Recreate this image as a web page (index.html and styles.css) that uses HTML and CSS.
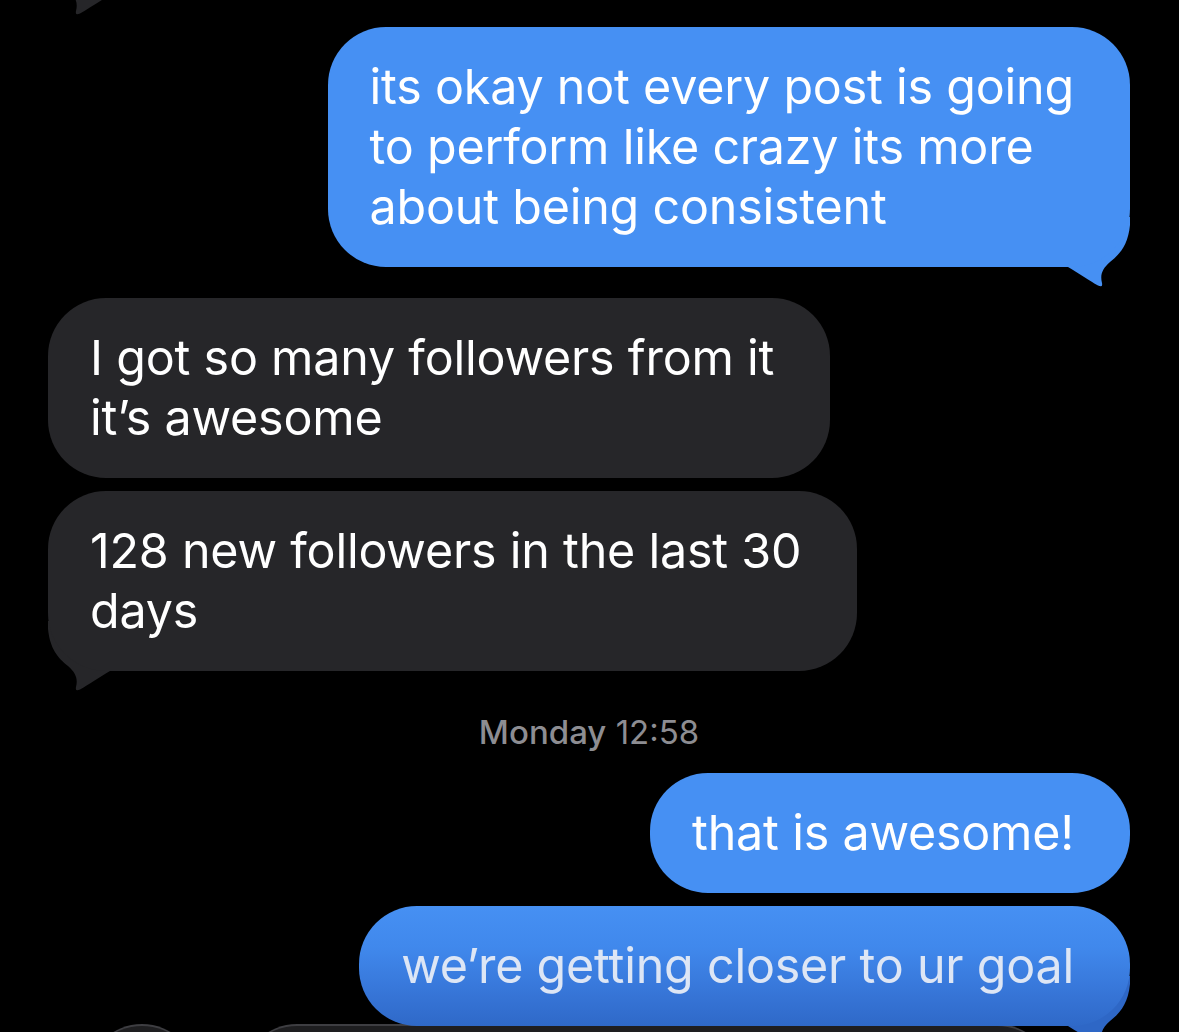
FILE: index.html
```html
<!DOCTYPE html>
<html lang="en">
<head>
    <meta charset="UTF-8">
    <meta name="viewport" content="width=device-width, initial-scale=1.0">
    <title>Messages</title>
    <link rel="stylesheet" href="styles.css">
</head>
<body>

    <div class="chat">
        <!-- tail of the message above, mostly scrolled off -->
        <div class="prev-tail">
            <svg width="70" height="15" viewBox="0 55 70 15">
                <path class="fill-gray" transform="translate(70 0) scale(-1 1)" d="M0 50 L8 50 C18 56 30 64 38 68.5 Q43 71 42 66 C40 58 42 52 50 45 C60 37 68 28 70 8 L70 0 L0 0 Z"/>
            </svg>
        </div>

        <div class="row sent">
            <div class="bubble blue">
                <svg class="tail tail-right" width="70" height="70" viewBox="0 0 70 70">
                    <path class="fill-blue" d="M0 50 L8 50 C18 56 30 64 38 68.5 Q43 71 42 66 C40 58 42 52 50 45 C60 37 68 28 70 8 L70 0 L0 0 Z"/>
                </svg>
                its okay not every post is going<br>to perform like crazy its more<br>about being consistent
            </div>
        </div>

        <div class="row received group-start">
            <div class="bubble gray">I got so many followers from it<br>it’s awesome</div>
        </div>

        <div class="row received">
            <div class="bubble gray">
                <svg class="tail tail-left" width="70" height="70" viewBox="0 0 70 70">
                    <path class="fill-gray" transform="translate(70 0) scale(-1 1)" d="M0 50 L8 50 C18 56 30 64 38 68.5 Q43 71 42 66 C40 58 42 52 50 45 C60 37 68 28 70 8 L70 0 L0 0 Z"/>
                </svg>
                128 new followers in the last 30<br>days
            </div>
        </div>

        <div class="timestamp"><b>Monday</b> 12:58</div>

        <div class="row sent">
            <div class="bubble blue">that is awesome!</div>
        </div>

        <div class="row sent close">
            <div class="bubble blue fading">
                <svg class="tail tail-right" width="70" height="70" viewBox="0 0 70 70">
                    <path class="fill-dark-blue" d="M0 50 L8 50 C18 56 30 64 38 68.5 Q43 71 42 66 C40 58 42 52 50 45 C60 37 68 28 70 8 L70 0 L0 0 Z"/>
                </svg>
                we’re getting closer to ur goal
            </div>
        </div>

        <div class="input-bar">
            <div class="plus-btn"></div>
            <div class="text-field"></div>
        </div>
    </div>

</body>
</html>
```

FILE: styles.css
```css
html, body {
    height: 100%;
    overflow: hidden;
}

body {
    margin: 0;
    background: #000;
    font-family: 'Inter', 'Noto Sans', sans-serif;
    color: #fff;
}

.chat {
    display: flex;
    flex-direction: column;
    padding: 0 49px 0 48px;
}

.prev-tail {
    height: 15px;
    margin-bottom: 12px;
}

.prev-tail svg {
    display: block;
}

.row {
    display: flex;
    margin-bottom: 13px;
}

.row.sent {
    justify-content: flex-end;
}

.row.received {
    justify-content: flex-start;
}

.row.group-start {
    margin-top: 18px;
}

.row.close {
    margin-top: 0;
    margin-bottom: -2px;
}

.bubble {
    position: relative;
    padding: 30px 56px 30px 42px;
    border-radius: 58px;
    font-size: 48.4px;
    line-height: 60px;
    letter-spacing: -0.2px;
    white-space: nowrap;
}

.bubble.blue {
    background: #4690f3;
}

.bubble.gray {
    background: #262629;
}

.bubble.fading {
    background: linear-gradient(to bottom, #4690f3 0%, #4088ec 35%, #3674d6 75%, #2f69c8 100%);
    color: #dde6f5;
}

/* tails sit behind the bubble so only the hook shows */
.tail {
    position: absolute;
    bottom: -20px;
    z-index: -1;
    display: block;
}

.tail-right {
    right: 0;
}

.tail-left {
    left: 0;
}

.fill-blue {
    fill: #4690f3;
}

.fill-gray {
    fill: #262629;
}

.fill-dark-blue {
    fill: #2e67c6;
}

.timestamp {
    text-align: center;
    font-size: 33px;
    line-height: 40px;
    color: #8d8d92;
    margin: 28px 0 21px;
}

.timestamp b {
    font-weight: 500;
}

.input-bar {
    display: flex;
    align-items: flex-start;
    gap: 45px;
    padding-left: 39px;
}

.plus-btn {
    width: 110px;
    height: 110px;
    border-radius: 50%;
    background: #1e1e20;
    border-top: 2px solid #3e3e42;
    box-sizing: border-box;
}

.text-field {
    width: 810px;
    height: 110px;
    border-radius: 55px;
    background: #1e1e20;
    border-top: 2px solid #3e3e42;
    box-sizing: border-box;
}
```
